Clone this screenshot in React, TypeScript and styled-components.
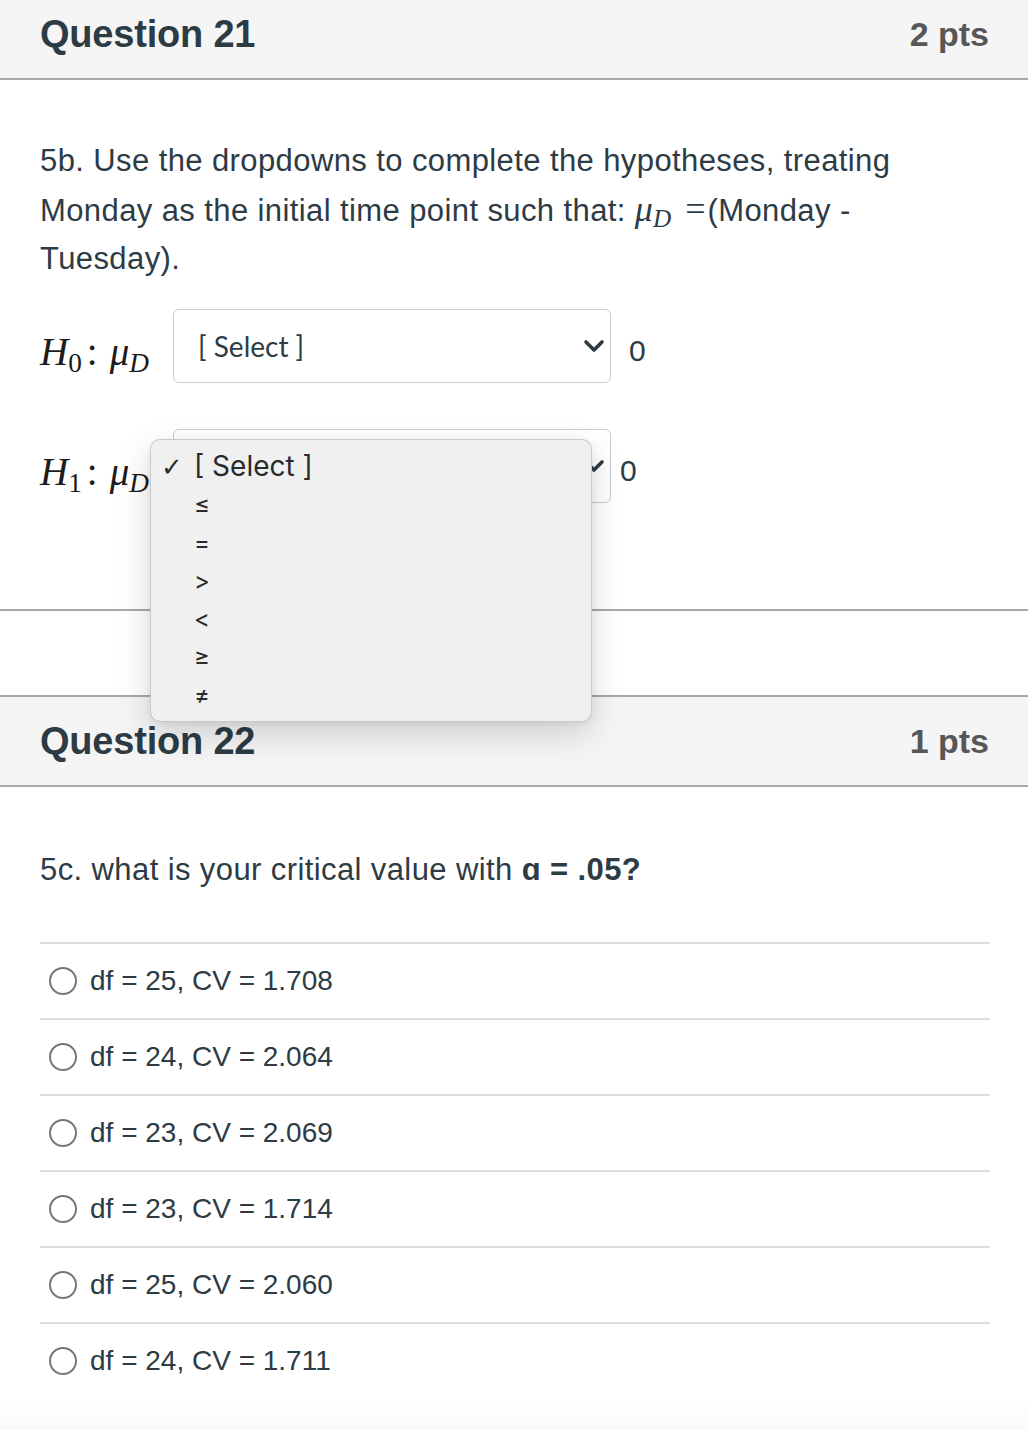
import React from "react";
import styled, { createGlobalStyle } from "styled-components";

const Global = createGlobalStyle`
  html, body { margin: 0; padding: 0; background: #ffffff; }
  body { font-family: "Liberation Sans", Arial, sans-serif; color: #2d3b45; }
`;

const Page = styled.div`
  width: 1028px;
  min-height: 1430px;
  display: flex;
  flex-direction: column;
  background: #ffffff;
`;

const Card = styled.section<{ $topBorder?: boolean; $bottomBorder?: boolean }>`
  display: flex;
  flex-direction: column;
  border-top: ${(p) => (p.$topBorder ? "2px solid #a8a8a8" : "none")};
  border-bottom: ${(p) => (p.$bottomBorder ? "2px solid #a8a8a8" : "none")};
`;

const Header = styled.header<{ $cropped?: boolean }>`
  display: flex;
  align-items: center;
  justify-content: space-between;
  box-sizing: border-box;
  height: ${(p) => (p.$cropped ? 80 : 90)}px;
  padding: 0 39px ${(p) => (p.$cropped ? 10 : 0)}px 40px;
  background: #f5f5f5;
  border-bottom: 2px solid #a8a8a8;
`;

const Title = styled.h2`
  margin: 0;
  font-family: "Liberation Sans", Arial, sans-serif;
  font-weight: 700;
  font-size: 38px;
  letter-spacing: -0.2px;
  color: #2d3b45;
`;

const Points = styled.span`
  font-family: "Liberation Sans", Arial, sans-serif;
  font-weight: 700;
  font-size: 34px;
  color: #575757;
`;

const Body = styled.div<{ $pt: number; $pb: number }>`
  display: flex;
  flex-direction: column;
  padding: ${(p) => p.$pt}px 38px ${(p) => p.$pb}px 40px;
`;

const Prompt = styled.p`
  margin: 0;
  font-size: 31px;
  letter-spacing: 0.4px;
  line-height: 48px;
  color: #2d3b45;
`;

const InlineMath = styled.span`
  font-family: "Liberation Serif", "DejaVu Serif", serif;
  font-size: 36px;
  letter-spacing: 0;
  margin: 0 2px 0 0;
`;

const MathItalic = styled.i`
  font-style: italic;
`;

const Sub = styled.sub`
  font-size: 0.7em;
  vertical-align: -0.25em;
  line-height: 0;
`;

const MathEq = styled.span`
  font-family: "Liberation Serif", "DejaVu Serif", serif;
  margin: 0 0 0 14px;
`;

const HypRow = styled.div<{ $mt: number }>`
  position: relative;
  display: flex;
  align-items: center;
  margin-top: ${(p) => p.$mt}px;
  height: 74px;
`;

const HypLabel = styled.span`
  width: 133px;
  font-family: "Liberation Serif", "DejaVu Serif", serif;
  font-size: 39px;
  color: #1b1b1b;
  white-space: nowrap;
  padding-top: 10px;
`;

const Colon = styled.span`
  margin: 0 12px 0 5px;
`;

const SelectBox = styled.div`
  box-sizing: border-box;
  width: 438px;
  height: 74px;
  display: flex;
  align-items: center;
  justify-content: space-between;
  padding: 0 5px 0 24px;
  border: 1px solid #c7cdd1;
  border-radius: 6px;
  background: #ffffff;
  font-family: Lato, "Liberation Sans", sans-serif;
  font-size: 28px;
  color: #2d3b45;
`;

const Zero = styled.span<{ $ml: number }>`
  margin-left: ${(p) => p.$ml}px;
  font-size: 30px;
  padding-top: 10px;
  color: #2d3b45;
`;

const Popover = styled.ul`
  position: absolute;
  left: 110px;
  top: 10px;
  width: 442px;
  height: 283px;
  box-sizing: border-box;
  margin: 0;
  padding: 7px 0 0 0;
  list-style: none;
  background: #f0f0f0;
  border: 1px solid rgba(0, 0, 0, 0.16);
  border-radius: 10px;
  box-shadow: 0 12px 34px rgba(0, 0, 0, 0.16), 0 2px 6px rgba(0, 0, 0, 0.06);
  z-index: 5;
`;

const Option = styled.li<{ $big?: boolean }>`
  display: flex;
  align-items: center;
  height: 38px;
  font-family: Inter, "Noto Sans", sans-serif;
  font-size: ${(p) => (p.$big ? 28 : 24)}px;
  color: #2a2a2a;
`;

const Check = styled.span`
  width: 43px;
  padding-left: 10px;
  box-sizing: border-box;
  font-family: "Noto Sans", "DejaVu Sans", sans-serif;
  font-size: 26px;
  flex: none;
`;

const Gap = styled.div`
  height: 84px;
`;

const Answers = styled.ul`
  margin: 48px 0 0 0;
  padding: 0;
  list-style: none;
`;

const Answer = styled.li`
  display: flex;
  align-items: center;
  height: 76px;
  box-sizing: border-box;
  border-top: 2px solid #dedede;
  padding: 0 0 0 9px;
  font-size: 28px;
  color: #2d3b45;
`;

const Radio = styled.span`
  width: 24px;
  height: 24px;
  border: 2px solid #777777;
  border-radius: 50%;
  margin-right: 13px;
  flex: none;
`;

const Strong = styled.b`
  font-weight: 700;
`;

const Footer = styled.div`
  flex: 1;
  min-height: 31px;
  background: linear-gradient(#ffffff, #fafafa);
`;

const Chevron = () => (
  <svg width="22" height="14" viewBox="0 0 22 14">
    <path d="M3 3 L11 11 L19 3" fill="none" stroke="#2d3b45" strokeWidth="3.6" strokeLinecap="round" strokeLinejoin="round" />
  </svg>
);

const answers = [
  "df = 25, CV = 1.708",
  "df = 24, CV = 2.064",
  "df = 23, CV = 2.069",
  "df = 23, CV = 1.714",
  "df = 25, CV = 2.060",
  "df = 24, CV = 1.711",
];

const options = ["≤", "=", ">", "<", "≥", "≠"];

const Hyp = ({ n }: { n: number }) => (
  <HypLabel>
    <MathItalic>H</MathItalic>
    <Sub>{n}</Sub>
    <Colon>:</Colon>
    <MathItalic>μ</MathItalic>
    <Sub>
      <MathItalic>D</MathItalic>
    </Sub>
  </HypLabel>
);

export default function App() {
  return (
    <Page>
      <Global />
      <Card $bottomBorder>
        <Header $cropped>
          <Title>Question 21</Title>
          <Points>2 pts</Points>
        </Header>
        <Body $pt={57} $pb={106}>
          <Prompt>
            5b. Use the dropdowns to complete the hypotheses, treating
            <br />
            Monday as the initial time point such that:{" "}
            <InlineMath>
              <MathItalic>μ</MathItalic>
              <Sub>
                <MathItalic>D</MathItalic>
              </Sub>
              <MathEq>=</MathEq>
            </InlineMath>
            (Monday -
            <br />
            Tuesday).
          </Prompt>
          <HypRow $mt={26}>
            <Hyp n={0} />
            <SelectBox>
              <span>[ Select ]</span>
              <Chevron />
            </SelectBox>
            <Zero $ml={18}>0</Zero>
          </HypRow>
          <HypRow $mt={46}>
            <Hyp n={1} />
            <SelectBox>
              <span>[ Select ]</span>
              <Chevron />
            </SelectBox>
            <Zero $ml={9}>0</Zero>
            <Popover>
              <Option $big>
                <Check>✓</Check>[ Select ]
              </Option>
              {options.map((o) => (
                <Option key={o}>
                  <Check />
                  {o}
                </Option>
              ))}
            </Popover>
          </HypRow>
        </Body>
      </Card>
      <Gap />
      <Card $topBorder>
        <Header>
          <Title>Question 22</Title>
          <Points>1 pts</Points>
        </Header>
        <Body $pt={59} $pb={0}>
          <Prompt>
            5c. what is your critical value with <Strong>ɑ = .05?</Strong>
          </Prompt>
          <Answers>
            {answers.map((a, i) => (
              <Answer key={i}>
                <Radio />
                {a}
              </Answer>
            ))}
          </Answers>
        </Body>
      </Card>
      <Footer />
    </Page>
  );
}
